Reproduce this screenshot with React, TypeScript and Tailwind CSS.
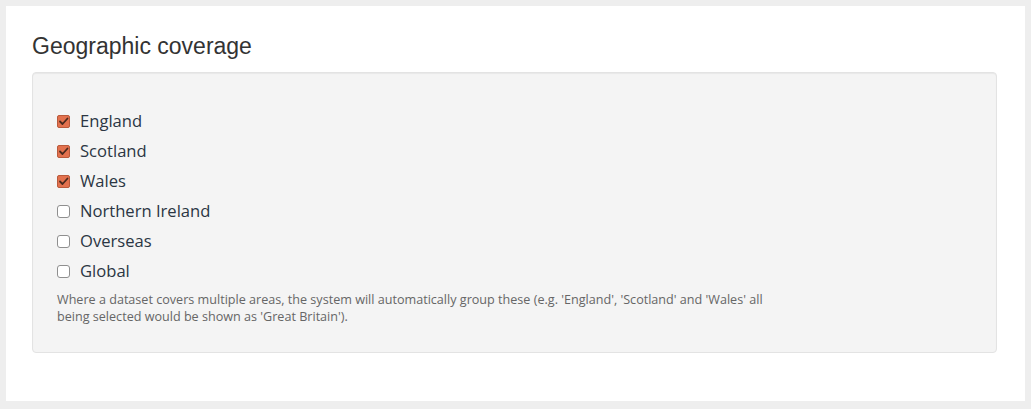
import { useState } from 'react';

const regions = [
    { name: 'England', checked: true },
    { name: 'Scotland', checked: true },
    { name: 'Wales', checked: true },
    { name: 'Northern Ireland', checked: false },
    { name: 'Overseas', checked: false },
    { name: 'Global', checked: false },
];

function Box({ checked }: { checked: boolean }) {
    if (!checked) {
        return <span className="block w-[13px] h-[13px] rounded-[3px] border border-[#8f8f8f] bg-white" />;
    }
    return (
        <span className="flex w-[13px] h-[13px] rounded-[2px] border border-[#b95a3c] bg-[#e2714e] items-center justify-center">
            <svg width="11" height="11" viewBox="0 0 11 11" fill="none">
                <path d="M2 5.5 L4.5 8 L9.5 2.5" stroke="#4a2a1f" strokeWidth="1.8" strokeLinecap="round" strokeLinejoin="round" />
            </svg>
        </span>
    );
}

export default function App() {
    const [items, setItems] = useState(regions);

    const toggle = (i: number) => {
        setItems(items.map((it, j) => (j === i ? { ...it, checked: !it.checked } : it)));
    };

    return (
        <div className="min-h-screen bg-[#eeeeee] p-[6px]">
            <div className="bg-white h-[395px] pl-[26px] pr-[28px] pt-[26px]">
                <h2 className="text-[23px] leading-[28px] text-[#333333] mb-[12px]" style={{ fontFamily: '"Liberation Sans", Arial, sans-serif' }}>
                    Geographic coverage
                </h2>
                <div className="bg-[#f4f4f4] border border-[#e3e3e3] rounded-[4px] shadow-[inset_0_1px_1px_rgba(0,0,0,0.05)] pt-[33px] pb-[27px] pl-[24px]" style={{ fontFamily: '"Open Sans", sans-serif' }}>
                    {items.map((it, i) => (
                        <label key={it.name} className="flex items-center h-[30px] cursor-pointer" onClick={() => toggle(i)}>
                            <Box checked={it.checked} />
                            <span className="ml-[10px] text-[16.6px] text-[#2b3643]">{it.name}</span>
                        </label>
                    ))}
                    <p className="mt-[5px] max-w-[726px] text-[12.6px] leading-[17px] text-[#666666]">
                        Where a dataset covers multiple areas, the system will automatically group these (e.g. 'England', 'Scotland' and 'Wales' all being selected would be shown as 'Great Britain').
                    </p>
                </div>
            </div>
        </div>
    );
}
